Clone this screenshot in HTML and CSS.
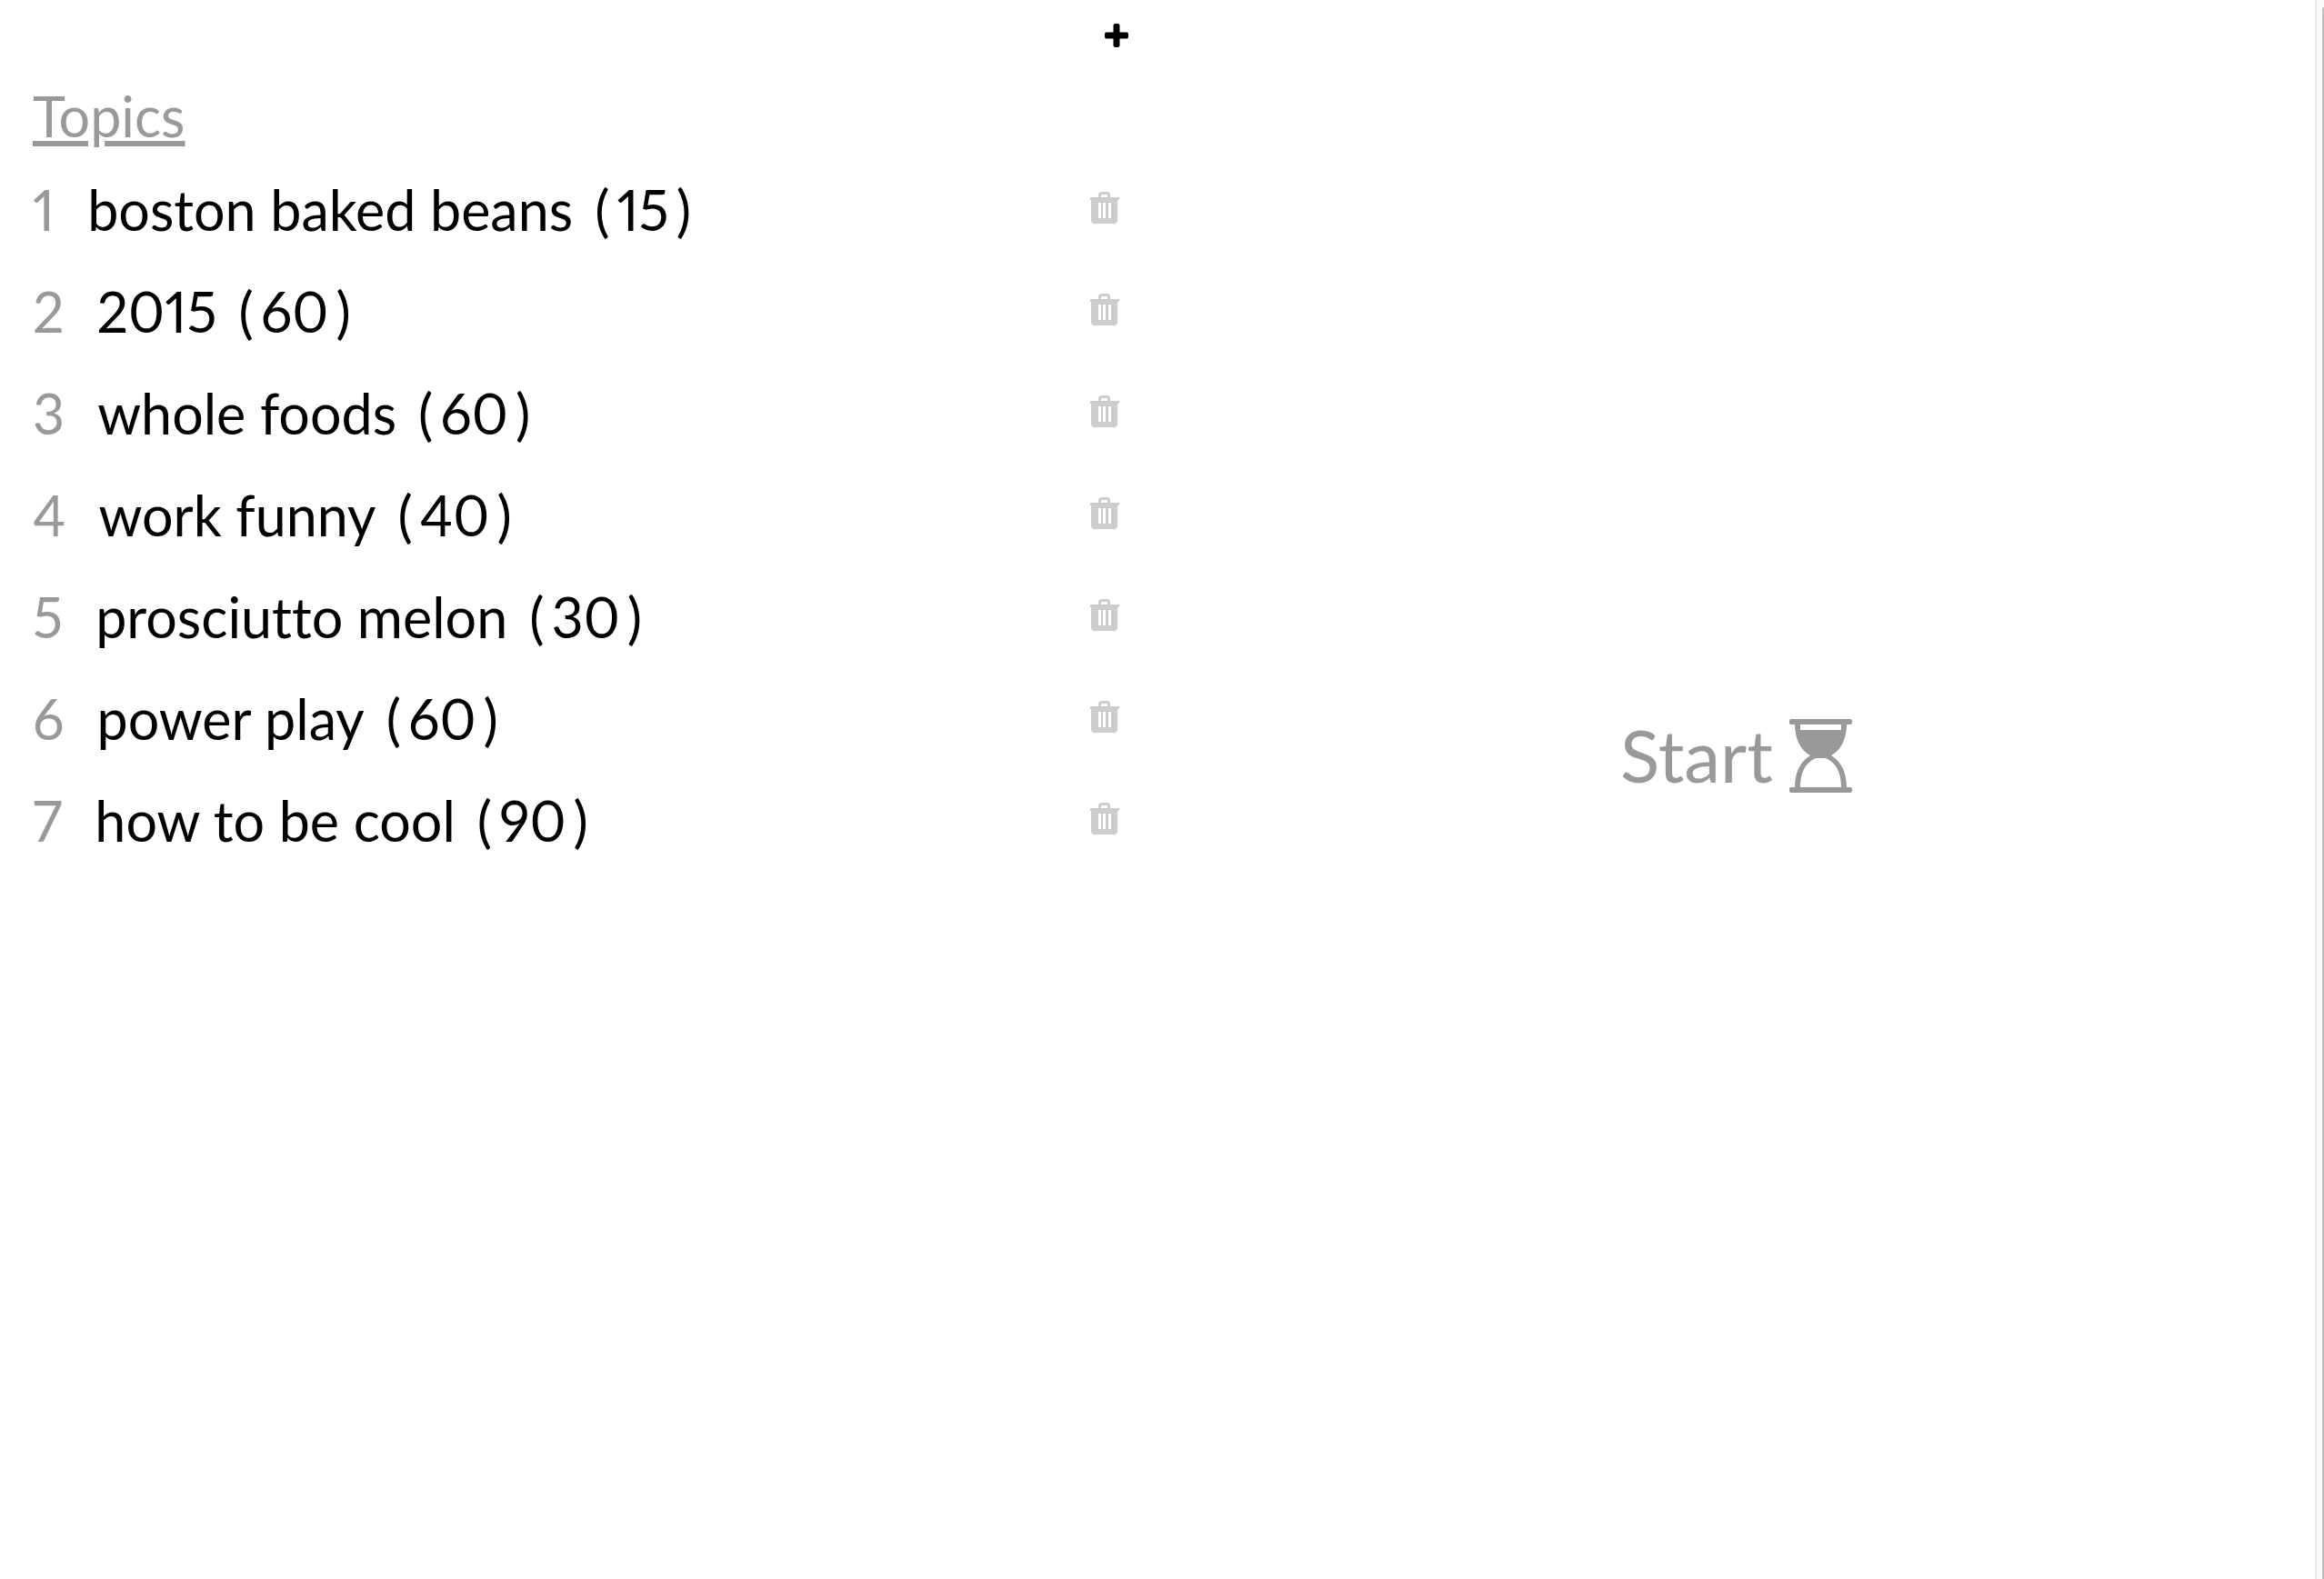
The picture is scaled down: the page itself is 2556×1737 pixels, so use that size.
FILE: index.html
```
<!DOCTYPE html>
<html lang="en">
<head>
    <meta charset="UTF-8">
    <meta name="viewport" content="width=device-width, initial-scale=1.0">
    <title>Topics</title>
    <link rel="stylesheet" href="styles.css">
</head>
<body>
    <svg class="sprite" aria-hidden="true">
        <symbol id="trash" viewBox="0 0 32 35">
            <path fill-rule="evenodd" d="M0 6H9V4Q9 0 13 0H18Q22 0 22 4V6H32V9H30V31Q30 35 26 35H5Q1 35 1 31V9H0ZM12 6H19V4Q19 3 18 3H13Q12 3 12 4ZM9 12V29H12V12ZM14 12V29H17V12ZM20 12V29H23V12Z"/>
        </symbol>
    </svg>
    <div class="container">
        <main class="topics">
            <div class="toolbar">
                <button type="button" class="icon-button" aria-label="Add topic">
                    <svg class="plus" viewBox="0 0 26 26"><path d="M9.5 2Q9.5 0 11.500 0H14.500Q16.500 0 16.500 2V9.500H24Q26 9.500 26 11.500V14.500Q26 16.500 24 16.500H16.500V24Q16.500 26 14.500 26H11.500Q9.500 26 9.500 24V16.500H2Q0 16.500 0 14.500V11.500Q0 9.500 2 9.500H9.500Z"/></svg>
                </button>
            </div>
            <h1>Topics</h1>
            <ol class="topic-list">
                <li><span class="number">1</span><span class="name">boston baked beans</span><span class="time">(<span>15</span>)</span><button type="button" class="icon-button" aria-label="Delete"><svg class="trash"><use href="#trash"/></svg></button></li>
                <li><span class="number">2</span><span class="name">2015</span><span class="time">(<span>60</span>)</span><button type="button" class="icon-button" aria-label="Delete"><svg class="trash"><use href="#trash"/></svg></button></li>
                <li><span class="number">3</span><span class="name">whole foods</span><span class="time">(<span>60</span>)</span><button type="button" class="icon-button" aria-label="Delete"><svg class="trash"><use href="#trash"/></svg></button></li>
                <li><span class="number">4</span><span class="name">work funny</span><span class="time">(<span>40</span>)</span><button type="button" class="icon-button" aria-label="Delete"><svg class="trash"><use href="#trash"/></svg></button></li>
                <li><span class="number">5</span><span class="name">prosciutto melon</span><span class="time">(<span>30</span>)</span><button type="button" class="icon-button" aria-label="Delete"><svg class="trash"><use href="#trash"/></svg></button></li>
                <li><span class="number">6</span><span class="name">power play</span><span class="time">(<span>60</span>)</span><button type="button" class="icon-button" aria-label="Delete"><svg class="trash"><use href="#trash"/></svg></button></li>
                <li><span class="number">7</span><span class="name">how to be cool</span><span class="time">(<span>90</span>)</span><button type="button" class="icon-button" aria-label="Delete"><svg class="trash"><use href="#trash"/></svg></button></li>
            </ol>
        </main>
        <section class="timer">
            <button type="button" class="start">
                <span>Start</span>
                <svg class="hourglass" viewBox="0 0 69 81">
                    <rect width="69" height="6" rx="2"/>
                    <rect y="75" width="69" height="6" rx="2"/>
                    <path fill-rule="evenodd" d="M6 5H63C63 22 57 34 46 40C57 47 63 58 63 76H6C6 58 12 47 23 40C12 34 6 22 6 5ZM12 6V12H57V6ZM29 43C18 48 12 58 12 75H57C57 58 51 48 40 43Z"/>
                </svg>
            </button>
        </section>
        <div class="scroll-track"><div class="scroll-thumb"></div></div>
    </div>
</body>
</html>
```
FILE: styles.css
```
* {
    box-sizing: border-box;
}
body {
    margin: 0;
    background-color: #fff;
    color: #000;
    font-family: Lato, sans-serif;
    font-size: 61px;
    font-variant-numeric: proportional-nums;
    font-variant-ligatures: none;
}
button {
    padding: 0;
    border: none;
    background: none;
    font: inherit;
    cursor: pointer;
}
svg {
    display: block;
}
.sprite {
    display: none;
}
.container {
    display: grid;
    grid-template-columns: 1fr 1fr 10px;
    min-height: 100vh;
}
.topics {
    padding: 0 32px 0 36px;
}
.toolbar {
    display: flex;
    justify-content: flex-end;
    padding-top: 26px;
}
.plus {
    width: 26px;
    height: 26px;
}
h1 {
    margin: 34px 0 0;
    color: #999;
    font-size: 61px;
    font-weight: normal;
    line-height: 84px;
    text-decoration: underline;
    text-decoration-thickness: 6px;
    text-underline-offset: 4px;
}
.topic-list {
    margin: 6px 0 0;
    padding: 0 10px 0 0;
    list-style: none;
}
.topic-list li {
    display: flex;
    align-items: center;
    height: 112px;
    padding-bottom: 4px;
}
.number {
    margin-right: 36px;
    color: #999;
}
.time {
    margin-left: 24px;
}
.time span {
    padding: 0 8px;
}
.topic-list .icon-button {
    margin-left: auto;
    padding-bottom: 4px;
}
.trash {
    width: 32px;
    height: 35px;
    fill: #ccc;
}
.timer {
    display: flex;
    align-items: center;
    justify-content: center;
    padding-bottom: 74px;
}
.start {
    display: flex;
    align-items: center;
    gap: 18px;
    color: #999;
    font-size: 80px;
}
.start span {
    padding-bottom: 4px;
}
.hourglass {
    width: 69px;
    height: 81px;
    fill: #999;
}
.scroll-track {
    padding-top: 8px;
    border-left: 2px solid #e8e8e8;
    background-color: #fafafa;
}
.scroll-thumb {
    width: 2px;
    height: 100%;
    margin-left: auto;
    border-top-left-radius: 2px;
    background-color: #c1c1c1;
}
```
